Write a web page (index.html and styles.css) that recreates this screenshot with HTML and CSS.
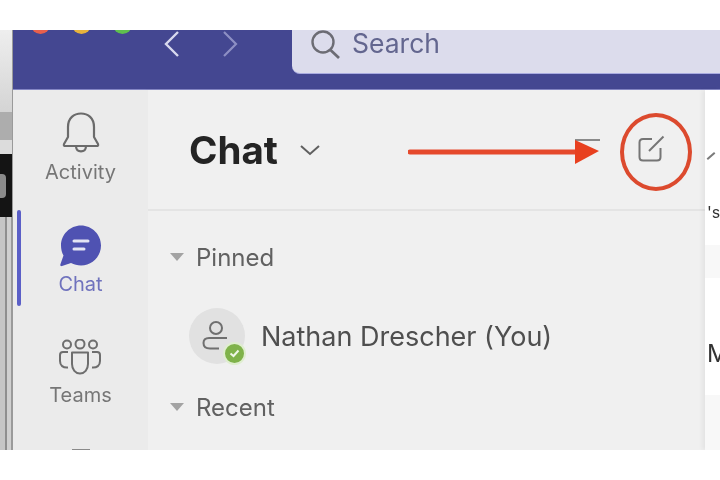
FILE: index.html
```html
<!DOCTYPE html>
<html>
<head>
    <title>Chat</title>
    <link rel="stylesheet" href="styles.css">
</head>
<body>
    <div class="shot">
        <div class="strip">
            <div class="strip-light"></div>
            <div class="strip-gray"></div>
            <div class="strip-pale"></div>
            <div class="strip-black"><span class="strip-key"></span></div>
            <div class="strip-lines"></div>
        </div>
        <div class="app">
            <div class="topbar">
                <div class="lights">
                    <span class="light red"></span>
                    <span class="light yellow"></span>
                    <span class="light green"></span>
                </div>
                <div class="history">
                    <svg width="18" height="28" viewBox="0 0 18 28"><path d="M15 2 L3 14 L15 26" fill="none" stroke="#d8d9ee" stroke-width="2.4"/></svg>
                    <svg class="forward" width="18" height="28" viewBox="0 0 18 28"><path d="M3 2 L15 14 L3 26" fill="none" stroke="#8d8fc4" stroke-width="2.2"/></svg>
                </div>
                <div class="search">
                    <svg width="32" height="32" viewBox="0 0 32 32"><circle cx="13" cy="12" r="10.5" fill="none" stroke="#6c6c74" stroke-width="2.4"/><path d="M20.5 20 L29 28" stroke="#6c6c74" stroke-width="2.8"/></svg>
                    <span class="search-text">Search</span>
                </div>
            </div>
            <div class="body">
                <div class="rail">
                    <span class="rail-active"></span>
                    <div class="rail-item item-activity">
                        <svg width="38" height="42" viewBox="0 0 38 42"><path d="M6 25 V15 C6 6 12 1.500 19 1.500 C26 1.500 32 6 32 15 V25 L36 32 C36.500 33.500 36 34 34.500 34 H3.500 C2 34 1.500 33.500 2 32 Z" fill="none" stroke="#6b6b6b" stroke-width="2.2" stroke-linejoin="round"/><path d="M14 34.500 C14.500 41 23.500 41 24 34.500" fill="none" stroke="#6b6b6b" stroke-width="2.2"/></svg>
                        <span class="rail-label">Activity</span>
                    </div>
                    <div class="rail-item item-chat">
                        <svg width="42" height="42" viewBox="0 0 42 42"><path d="M21 0.500 C32 0.500 41 9.500 41 20.500 C41 31.500 32 40.500 21 40.500 C17.500 40.500 14 39.500 11 38 L2 41 C0.500 41.500 0 40.500 0.500 39 L3.500 30.500 C1.800 27.500 1 24 1 20.500 C1 9.500 10 0.500 21 0.500 Z" fill="#4f52b2"/><path d="M14 16 H28 M14 24 H24" stroke="#e4e4f4" stroke-width="3" stroke-linecap="round"/></svg>
                        <span class="rail-label label-on">Chat</span>
                    </div>
                    <div class="rail-item item-teams">
                        <svg width="42" height="36" viewBox="0 0 42 36"><g fill="none" stroke="#6e6e6e" stroke-width="2"><circle cx="8" cy="5.500" r="4"/><circle cx="21" cy="5" r="4.500"/><circle cx="34" cy="5.500" r="4"/><path d="M13 13.500 H29 V25 C29 30.500 25.500 34.500 21 34.500 C16.500 34.500 13 30.500 13 25 Z" stroke-linejoin="round"/><path d="M9 13 H4 C2 13 1 14 1 16 V22 C1 26.500 4 29 9 28.500"/><path d="M33 13 H38 C40 13 41 14 41 16 V22 C41 26.500 38 29 33 28.500"/></g></svg>
                        <span class="rail-label">Teams</span>
                    </div>
                    <span class="rail-next"></span>
                </div>
                <div class="list">
                    <div class="list-head">
                        <h1 class="title">Chat</h1>
                        <svg class="title-caret" width="22" height="12" viewBox="0 0 22 12"><path d="M2 2 L11 10 L20 2" fill="none" stroke="#5f5f5f" stroke-width="2"/></svg>
                        <span class="filter-line"></span>
                        <svg class="compose" width="27" height="28" viewBox="0 0 27 28"><path d="M14 4 H5 C2.500 4 1.500 5 1.500 7.500 V22 C1.500 24.500 2.500 25.500 5 25.500 H19 C21.500 25.500 22.500 24.500 22.500 22 V13" fill="none" stroke="#757575" stroke-width="2"/><path d="M11 16 L25.500 1.500" stroke="#757575" stroke-width="2"/></svg>
                    </div>
                    <div class="section">
                        <span class="tri"></span>
                        <span class="section-name">Pinned</span>
                    </div>
                    <div class="person">
                        <div class="avatar">
                            <svg width="30" height="30" viewBox="0 0 30 30"><g fill="none" stroke="#6f6f6f" stroke-width="2"><circle cx="14" cy="7" r="6"/><path d="M25 17 H7 C3.500 17 1.500 19 1.500 22 C1.500 25.500 4 27.500 8 27.500 H17"/></g></svg>
                            <span class="status">
                                <svg width="11" height="9" viewBox="0 0 11 9"><path d="M1.500 4.500 L4.500 7 L9.500 1.500" fill="none" stroke="#eef6e6" stroke-width="2"/></svg>
                            </span>
                        </div>
                        <span class="person-name">Nathan Drescher (You)</span>
                    </div>
                    <div class="section">
                        <span class="tri"></span>
                        <span class="section-name">Recent</span>
                    </div>
                </div>
                <div class="main">
                    <span class="main-tick"></span>
                    <span class="main-dots">'s</span>
                    <span class="main-band"></span>
                    <span class="main-letter">M</span>
                    <span class="main-band band-low"></span>
                </div>
            </div>
        </div>
        <svg class="arrow" width="192" height="26" viewBox="0 0 192 26"><path d="M2 13 H172" stroke="#e5492c" stroke-width="5" stroke-linecap="round"/><path d="M167 1 L191 12 L167 25 Z" fill="#e8401f"/></svg>
        <span class="ring"></span>
    </div>
</body>
</html>
```
FILE: styles.css
```css
* {
    margin: 0px;
    box-sizing: border-box;
}

body {
    background: #ffffff;
    font-family: "Inter", "Liberation Sans", sans-serif;
    overflow: hidden;
}

.shot {
    display: flex;
    position: relative;
    width: 720px;
    height: 420px;
    margin-top: 30px;
    filter: blur(0.6px);
}

/* sliver of the window behind */
.strip {
    display: flex;
    flex-direction: column;
    width: 13px;
    flex-shrink: 0;
    background: #b5b5b5;
    border-right: 1px solid #9a9a9a;
}

.strip-light {
    height: 82px;
    background: linear-gradient(#eeeeee, #d4d4d4);
}

.strip-gray {
    height: 28px;
    background: #adadad;
}

.strip-pale {
    height: 14px;
    background: #dcdcdc;
}

.strip-black {
    display: flex;
    align-items: center;
    height: 63px;
    background: #141414;
}

.strip-key {
    width: 6px;
    height: 24px;
    background: #8b8b8b;
    border-radius: 0 4px 4px 0;
}

.strip-lines {
    flex: 1;
    background: linear-gradient(90deg, #c6c6c6 0 5px, #8f8f8f 5px 7px, #d0d0d0 7px 11px, #9a9a9a 11px);
}

.app {
    display: flex;
    flex-direction: column;
    flex: 1;
    min-width: 0;
}

.topbar {
    display: flex;
    height: 60px;
    flex-shrink: 0;
    background: #444791;
    border-bottom: 1px solid #8486c4;
}

/* only the bottoms of the window buttons show */
.lights {
    display: flex;
    gap: 22px;
    width: 150px;
    height: 4px;
    padding-left: 18px;
    overflow: hidden;
}

.light {
    flex-shrink: 0;
    width: 19px;
    height: 19px;
    margin-top: -15px;
    border-radius: 50%;
}

.red {
    background: #e9604c;
}

.yellow {
    background: #e8b33c;
}

.green {
    background: #5fc04e;
}

.history {
    display: flex;
    width: 129px;
}

.forward {
    margin-left: 40px;
}

.search {
    display: flex;
    align-items: flex-start;
    gap: 10px;
    flex: 1;
    height: 44px;
    padding-left: 18px;
    background: #dcdcec;
    border-bottom: 1px solid #a9abe0;
    border-bottom-left-radius: 8px;
}

.search-text {
    font-size: 26.500px;
    line-height: 27px;
    color: #63668f;
}

.body {
    display: flex;
    flex: 1;
    min-height: 0;
}

.rail {
    display: flex;
    flex-direction: column;
    align-items: center;
    position: relative;
    width: 135px;
    flex-shrink: 0;
    background: #ebebeb;
    padding-top: 22px;
}

.rail-active {
    position: absolute;
    left: 4px;
    top: 120px;
    width: 4px;
    height: 96px;
    background: #5b5fc7;
    border-radius: 2px;
}

.rail-item {
    display: flex;
    flex-direction: column;
    align-items: center;
}

.rail-label {
    font-size: 20px;
    line-height: 22px;
    color: #767676;
}

.label-on {
    color: #6f72bd;
}

.item-activity svg {
    margin-bottom: 7px;
}

.item-chat {
    margin-top: 42px;
}

.item-chat svg {
    margin-bottom: 6px;
}

.item-teams {
    margin-top: 44px;
}

.item-teams svg {
    margin-bottom: 9px;
}

.rail-next {
    width: 18px;
    height: 2px;
    margin-top: 43px;
    background: #8a8a8a;
}

.list {
    flex: 1;
    min-width: 0;
    background: #f0f0f0;
    box-shadow: -2px 0 3px rgba(0, 0, 0, 0.04);
}

.list-head {
    display: flex;
    align-items: center;
    position: relative;
    height: 121px;
    padding-left: 41px;
    border-bottom: 2px solid #e4e4e4;
}

.title {
    font-size: 38.500px;
    font-weight: 700;
    line-height: 44px;
    color: #242424;
}

.title-caret {
    margin-left: 21px;
}

.filter-line {
    width: 25px;
    height: 2px;
    margin-left: 254px;
    margin-bottom: 20px;
    background: #8a8a8a;
}

.compose {
    margin-left: 38px;
    margin-bottom: 2px;
}

.section {
    display: flex;
    align-items: center;
    height: 30px;
    padding-left: 22px;
}

.list-head + .section {
    margin-top: 31px;
}

.tri {
    width: 0;
    height: 0;
    border-left: 7px solid transparent;
    border-right: 7px solid transparent;
    border-top: 8px solid #a3a3a3;
}

.section-name {
    margin-left: 12px;
    font-size: 24px;
    color: #616161;
}

.person {
    display: flex;
    align-items: center;
    gap: 16px;
    height: 56px;
    margin: 36px 0 28px 41px;
}

.avatar {
    display: flex;
    align-items: center;
    justify-content: center;
    position: relative;
    width: 56px;
    height: 56px;
    background: #e1e1e1;
    border-radius: 50%;
}

/* status badge sits on the avatar */
.status {
    display: flex;
    align-items: center;
    justify-content: center;
    position: absolute;
    right: -1px;
    bottom: -1px;
    width: 23px;
    height: 23px;
    background: #7fb24a;
    border: 2px solid #dfeecf;
    border-radius: 50%;
}

.person-name {
    font-size: 27px;
    color: #4f4f4f;
    white-space: nowrap;
}

.main {
    position: relative;
    width: 15px;
    flex-shrink: 0;
    background: #ffffff;
    box-shadow: -3px 0 4px rgba(0, 0, 0, 0.05);
    overflow: hidden;
}

.main-tick {
    position: absolute;
    left: 1px;
    top: 65px;
    width: 10px;
    height: 2px;
    background: #7a7a7a;
    transform: rotate(-42deg);
}

.main-dots {
    position: absolute;
    left: 2px;
    top: 112px;
    font-size: 16px;
    line-height: 20px;
    color: #333333;
}

.main-band {
    position: absolute;
    left: 0;
    top: 155px;
    width: 15px;
    height: 33px;
    background: #f8f8f8;
}

.band-low {
    top: 305px;
    height: 115px;
}

.main-letter {
    position: absolute;
    left: 2px;
    top: 250px;
    font-size: 24px;
    line-height: 28px;
    color: #333333;
}

.arrow {
    position: absolute;
    left: 408px;
    top: 109px;
}

.ring {
    position: absolute;
    left: 620px;
    top: 83px;
    width: 72px;
    height: 78px;
    border: 4px solid #dc4a2e;
    border-radius: 50%;
}
```
